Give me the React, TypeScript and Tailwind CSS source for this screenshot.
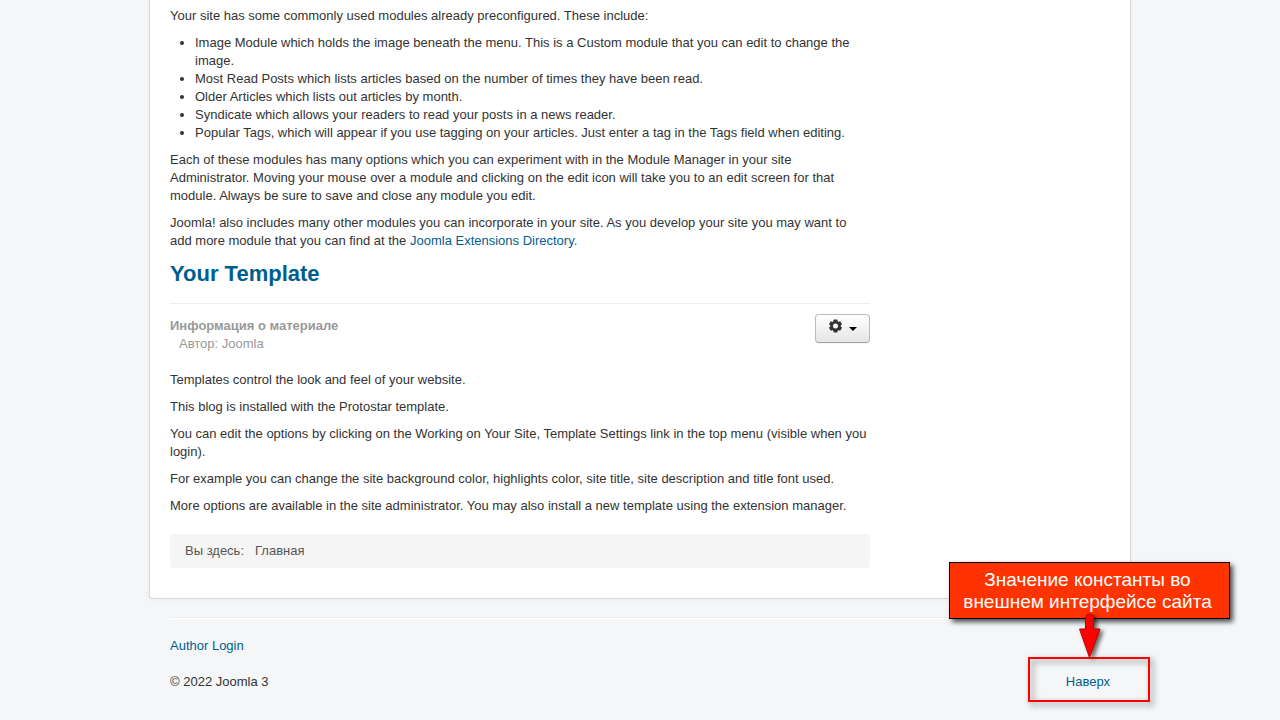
const modules = [
  "Image Module which holds the image beneath the menu. This is a Custom module that you can edit to change the image.",
  "Most Read Posts which lists articles based on the number of times they have been read.",
  "Older Articles which lists out articles by month.",
  "Syndicate which allows your readers to read your posts in a news reader.",
  "Popular Tags, which will appear if you use tagging on your articles. Just enter a tag in the Tags field when editing.",
];

const templateNotes = [
  "Templates control the look and feel of your website.",
  "This blog is installed with the Protostar template.",
  "You can edit the options by clicking on the Working on Your Site, Template Settings link in the top menu (visible when you login).",
  "For example you can change the site background color, highlights color, site title, site description and title font used.",
  "More options are available in the site administrator. You may also install a new template using the extension manager.",
];

const GearIcon = () => (
  <svg width="14" height="14" viewBox="0 0 14 14" aria-hidden="true">
    <g fill="#333333">
      <rect x="5.500" y="0.500" width="4" height="13" rx="0.800" />
      <rect x="5.500" y="0.500" width="4" height="13" rx="0.800" transform="rotate(60 7.500 7)" />
      <rect x="5.500" y="0.500" width="4" height="13" rx="0.800" transform="rotate(120 7.500 7)" />
      <circle cx="7.500" cy="7" r="5.200" />
    </g>
    <circle cx="7.500" cy="7" r="2.500" fill="#f8f8f8" />
  </svg>
);

const ModulesPost = () => (
  <div>
    <p className="mb-[9px]">
      Your site has some commonly used modules already preconfigured. These
      include:
    </p>
    <ul className="mb-[9px] ml-[25px] list-disc">
      {modules.map((item) => (
        <li key={item}>{item}</li>
      ))}
    </ul>
    <p className="mb-[9px]">
      Each of these modules has many options which you can experiment with in
      the Module Manager in your site Administrator. Moving your mouse over a
      module and clicking on the edit icon will take you to an edit screen for
      that module. Always be sure to save and close any module you edit.
    </p>
    <p className="mb-[9px]">
      Joomla! also includes many other modules you can incorporate in your
      site. As you develop your site you may want to add more module that you
      can find at the{" "}
      <a href="#extensions" className="text-[#005e8d]">
        Joomla Extensions Directory.
      </a>
    </p>
  </div>
);

const TemplatePost = () => (
  <div>
    <div className="mb-[10px] border-b border-[#eeeeee] pt-px pb-[15px]">
      <h2 className="text-[22px] leading-7 font-bold">
        <a href="#template" className="text-[#005e8d]">
          Your Template
        </a>
      </h2>
    </div>
    <div className="mb-[18px] flex items-start justify-between">
      <dl className="pt-[3px] text-[#999999]">
        <dt className="font-bold">Информация о материале</dt>
        <dd className="ml-[9px]">Автор: Joomla</dd>
      </dl>
      <button
        type="button"
        aria-label="Инструменты"
        className="flex h-[29px] items-start gap-[7px] rounded border border-[#bbbbbb] border-b-[#a2a2a2] bg-linear-to-b from-white to-[#e6e6e6] px-3 pt-1 shadow-[0_1px_2px_rgba(0,0,0,0.05)]"
      >
        <GearIcon />
        <svg width="8" height="4" viewBox="0 0 8 4" className="mt-2" aria-hidden="true">
          <path d="M0 0h8L4 4z" fill="#000000" />
        </svg>
      </button>
    </div>
    {templateNotes.map((note) => (
      <p key={note} className="mb-[9px]">
        {note}
      </p>
    ))}
  </div>
);

const Callout = () => (
  <>
    <div className="pointer-events-none absolute -top-4 -right-10 h-[45px] w-[122px] border-2 border-[#ff0000] drop-shadow-[3px_3px_3px_rgba(0,0,0,0.5)]" />
    <div className="pointer-events-none absolute -top-[111px] -right-[120px] w-[281px] border border-black bg-[#ff3300] pt-[6px] pr-4 pb-[5px] pl-3 text-center text-[19px] leading-[22px] text-white shadow-[3px_3px_5px_rgba(0,0,0,0.7)]">
      Значение константы во внешнем интерфейсе сайта
    </div>
    <svg
      width="24"
      height="46"
      viewBox="0 0 24 46"
      className="pointer-events-none absolute -top-[60px] right-2 drop-shadow-[3px_2px_2px_rgba(0,0,0,0.6)]"
      aria-hidden="true"
    >
      <path
        d="M7.500 16V5a4 4 0 0 1 8 0v11h6.500L11.500 44.500 1.500 16z"
        fill="#ff0000"
        stroke="#c00000"
      />
    </svg>
  </>
);

const Footer = () => (
  <footer className="mx-auto max-w-[980px] px-5">
    <hr className="mt-[18px] mb-[18px] border-t border-b border-t-[#eeeeee] border-b-white" />
    <p>
      <a href="#login" className="text-[#005e8d]">
        Author Login
      </a>
    </p>
    <div className="mt-[18px] flex justify-between">
      <p>© 2022 Joomla 3</p>
      <div className="relative">
        <a href="#top" className="text-[#005e8d]">
          Наверх
        </a>
        <Callout />
      </div>
    </div>
  </footer>
);

const App = () => {
  return (
    <div className="min-h-screen overflow-hidden bg-[#f4f6f7] font-['Liberation_Sans',Arial,sans-serif] text-[13px] leading-[18px] text-[#333333]">
      <div className="mx-auto max-w-[982px] rounded-b border border-t-0 border-black/15 bg-white px-5 pt-[7px] pb-[30px] shadow-[0_0_6px_rgba(0,0,0,0.05)]">
        <main className="max-w-[700px]">
          <ModulesPost />
          <TemplatePost />
          <nav
            aria-label="Breadcrumbs"
            className="mt-[19px] flex gap-[11px] rounded bg-[#f5f5f5] px-[15px] py-2 text-[#555555]"
          >
            <span>Вы здесь:</span>
            <span>Главная</span>
          </nav>
        </main>
      </div>
      <Footer />
    </div>
  );
};

export default App;
